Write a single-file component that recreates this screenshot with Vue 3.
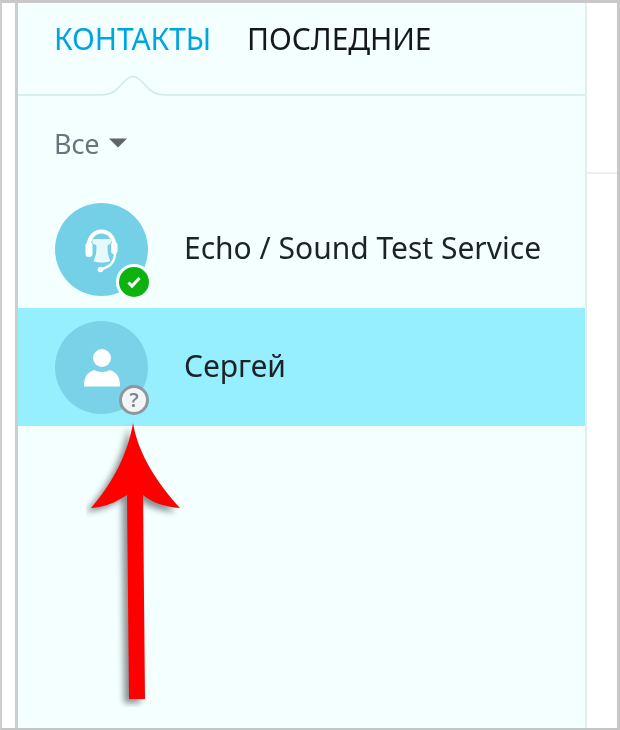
<script setup>
const contacts = [
  { name: 'Echo / Sound Test Service', kind: 'echo' },
  { name: 'Сергей', kind: 'user' },
]
</script>

<template>
  <div class="frame">
    <aside class="side">
      <nav class="tabs">
        <span class="tab active">КОНТАКТЫ</span>
        <span class="tab">ПОСЛЕДНИЕ</span>
      </nav>
      <svg class="rule" width="567" height="32" viewBox="0 0 567 32">
        <path d="M0 30H80C92 30 97 27 102 21C107 15 111 11.5 115 11.5C119 11.5 123 15 128 21C133 27 138 30 148 30H567" fill="none" stroke="#cfe9ec" stroke-width="1.6" />
      </svg>
      <div class="filter">
        <span>Все</span>
        <svg width="18" height="10" viewBox="0 0 18 10"><path d="M0 0.5H18L9 9.5Z" fill="#5f6467" /></svg>
      </div>
      <ul class="list">
        <li v-for="c in contacts" :key="c.name" class="row" :class="{ selected: c.kind === 'user' }">
          <div class="avatar">
            <svg v-if="c.kind === 'echo'" class="ico-echo" width="34" height="44" viewBox="0 0 34 44">
              <path d="M8.500 10H24.500C26 10 27 14 25 15C23 16 22.500 16 22.500 18C22.500 24 23.500 28 25.500 32C20 34 13 34 8.500 32C10.500 28 11.500 24 11.500 18C11.500 16 11 16 8.500 15C6.500 14 7 10 8.500 10Z" fill="#e6fafc" />
              <path d="M3.500 18C3.500 9 9 2.500 16.500 2.500C24 2.500 29.500 9 29.500 18" fill="none" stroke="#fff" stroke-width="4" />
              <rect x="0.500" y="13" width="7" height="15" rx="3.500" fill="#fff" />
              <rect x="26" y="13" width="6.500" height="12" rx="3" fill="#fff" />
              <path d="M30 24C30 33 24 38 17 40" fill="none" stroke="#fff" stroke-width="2.400" />
              <circle cx="15.500" cy="40.500" r="2.800" fill="#fff" />
            </svg>
            <svg v-else class="ico-user" width="38" height="40" viewBox="0 0 38 40">
              <circle cx="19" cy="10" r="9" fill="#fff" />
              <path d="M1 38.500C1 30 3 25 11 22C15 24.500 23 24.500 27 22C35 25 37 30 37 38.500Z" fill="#fff" />
            </svg>
            <span class="badge" :class="c.kind">
              <svg v-if="c.kind === 'echo'" width="16" height="14" viewBox="0 0 16 14">
                <path d="M2.500 7.500L6 11L13.500 3" fill="none" stroke="#fff" stroke-width="3" />
              </svg>
              <span v-else class="q">?</span>
            </span>
          </div>
          <span class="name">{{ c.name }}</span>
        </li>
      </ul>
      <svg class="arrow" width="110" height="285" viewBox="0 0 110 285">
        <defs>
          <filter id="sh" x="-30%" y="-10%" width="160%" height="120%">
            <feGaussianBlur stdDeviation="3" />
          </filter>
        </defs>
        <g fill="#3c4a50" opacity=".6" filter="url(#sh)" transform="translate(-5 4)">
          <path d="M47 1C52 32 72 62 94 86C78 85 65 80 57 73L59 277H43L41 73C30 80 20 85 5 86C26 62 42 32 47 1Z" />
        </g>
        <path d="M47 1C52 32 72 62 94 86C78 85 65 80 57 73L59 277H43L41 73C30 80 20 85 5 86C26 62 42 32 47 1Z" fill="#fe0000" />
      </svg>
    </aside>
    <main class="pane"><div class="pane-head"></div></main>
  </div>
</template>

<style>
html, body { margin: 0; background: #fff; }
</style>

<style scoped>
.frame {
  width: 620px;
  height: 730px;
  box-sizing: border-box;
  display: flex;
  background: #fff;
  padding-left: 13px;
  border-left: 2px solid #cfcfcf;
  border-top: 3px solid #c8c8c8;
  border-bottom: 2px solid #c4c6c6;
  border-right: 3px solid #c8c8c8;
  font-family: "Noto Sans", "Open Sans", sans-serif;
  overflow: hidden;
  filter: blur(0.45px);
}
.side {
  position: relative;
  width: 572px;
  box-sizing: border-box;
  flex: none;
  background: #f4ffff;
  border-left: 3px solid #c9cfcf;
  border-right: 2px solid #e0eeee;
}
.tabs {
  display: flex;
  gap: 36px;
  padding: 16px 0 0 36px;
  height: 62px;
  box-sizing: border-box;
}
.tab {
  font-size: 30px;
  line-height: 40px;
  letter-spacing: -0.1px;
  color: #15181a;
}
.tab.active { color: #00a4e0; }
.rule { display: block; }
.filter {
  display: flex;
  align-items: center;
  gap: 10px;
  padding-left: 36px;
  margin-top: 28px;
  height: 36px;
  font-size: 27px;
  color: #67767e;
}
.list { list-style: none; margin: 29px 0 0; padding: 0; }
.row {
  height: 118px;
  display: flex;
  align-items: center;
  padding-left: 37px;
  gap: 36px;
}
.row.selected { background: #96efff; }
.avatar {
  position: relative;
  width: 93px;
  height: 93px;
  flex: none;
  border-radius: 50%;
  background: #74d0e6;
  display: flex;
  align-items: center;
  justify-content: center;
}
.selected .avatar { background: #79d2e8; }
.ico-echo { margin-top: 4px; }
.ico-user { margin-top: 1px; }
.badge {
  position: absolute;
  right: -1px;
  bottom: -1px;
  width: 30px;
  height: 30px;
  box-sizing: border-box;
  border-radius: 50%;
  display: flex;
  align-items: center;
  justify-content: center;
}
.badge.echo { background: #0eb20e; box-shadow: 0 0 0 3px #f4ffff; }
.badge.user { background: #f3f6f7; border: 3px solid #8e979b; }
.q { font-size: 20px; line-height: 1; font-weight: 600; color: #7d8689; }
.name {
  font-size: 30px;
  color: #1c2326;
  white-space: nowrap;
  padding-bottom: 3px;
}
.arrow { position: absolute; left: 68px; top: 419px; }
.pane { flex: 1; }
.pane-head { height: 169px; border-bottom: 2px solid #edeff0; }
</style>
